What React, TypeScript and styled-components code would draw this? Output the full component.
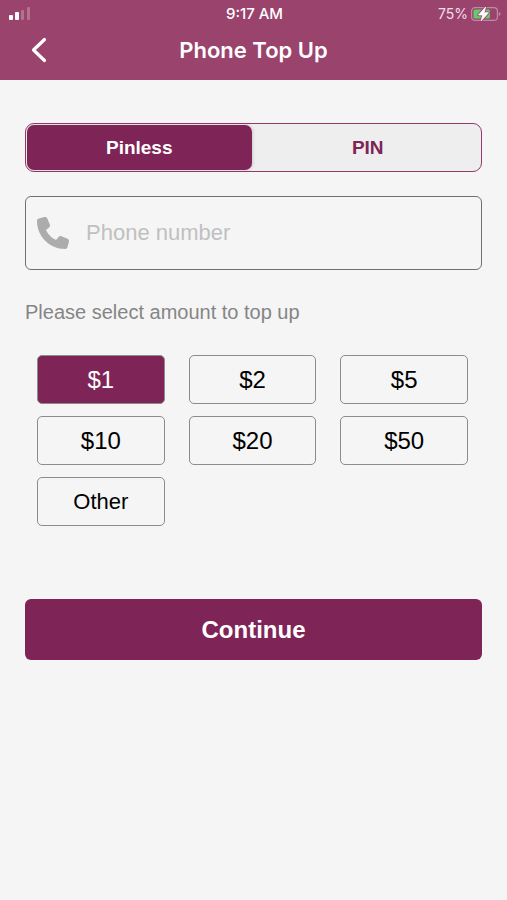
import React, { useState } from "react";
import styled, { createGlobalStyle } from "styled-components";

const plum = "#7f2457";

const GlobalStyle = createGlobalStyle`
  *, *::before, *::after { box-sizing: border-box; }
  body {
    margin: 0;
    background: #f5f5f5;
    color: #000;
    font-family: "Liberation Sans", Arial, Helvetica, sans-serif;
  }
  button, input { font-family: inherit; }
`;

const Screen = styled.div`
  min-height: 100vh;
  background: #f5f5f5;
`;

const Header = styled.header`
  background: #9a436d;
  color: #fff;
  font-family: Inter, "Liberation Sans", sans-serif;
`;

const StatusBar = styled.div`
  display: grid;
  grid-template-columns: 1fr auto 1fr;
  align-items: center;
  height: 28px;
  padding: 0 6px 0 8px;
  font-size: 14px;
  line-height: 16px;
`;

const Clock = styled.time`
  font-size: 15px;
  font-weight: 500;
`;

const BatteryStatus = styled.div`
  display: flex;
  align-items: center;
  justify-content: flex-end;
  gap: 3px;
  color: #f3dfe9;
`;

const TitleBar = styled.div`
  display: grid;
  grid-template-columns: 48px 1fr 48px;
  align-items: center;
  height: 52px;
  padding: 0 15px 8px;
`;

const BackButton = styled.button`
  display: grid;
  place-items: center;
  width: 48px;
  height: 44px;
  padding: 0;
  border: 0;
  background: none;
  color: #fff;
  cursor: pointer;
`;

const Title = styled.h1`
  margin: 0;
  font-size: 22px;
  line-height: 28px;
  font-weight: 600;
  text-align: center;
`;

const Form = styled.form`
  display: flex;
  flex-direction: column;
  padding: 43px 25px 24px;
`;

const Segments = styled.div`
  display: grid;
  grid-template-columns: 1fr 1fr;
  gap: 4px;
  height: 49px;
  padding: 1px;
  border: 1px solid #94396a;
  border-radius: 9px;
  background: #eee;
`;

const Segment = styled.button<{ $active: boolean }>`
  padding: 0;
  border: 0;
  border-radius: 7px;
  background: ${(p) => (p.$active ? plum : "transparent")};
  box-shadow: ${(p) => (p.$active ? "1px 0 3px rgba(0, 0, 0, 0.15)" : "none")};
  color: ${(p) => (p.$active ? "#fff" : plum)};
  font-size: 19px;
  font-weight: 700;
  line-height: 24px;
  cursor: pointer;
`;

const PhoneField = styled.label`
  display: flex;
  align-items: center;
  gap: 17px;
  height: 74px;
  margin-top: 24px;
  padding: 0 12px 0 11px;
  border: 1px solid #707070;
  border-radius: 6px;
`;

const PhoneInput = styled.input`
  flex: 1;
  min-width: 0;
  padding: 0;
  border: 0;
  outline: 0;
  background: transparent;
  color: #000;
  font-size: 22px;
  line-height: 28px;
  &::placeholder { color: #c0c0c0; opacity: 1; }
`;

const AmountGroup = styled.fieldset`
  min-width: 0;
  margin: 30px 0 0;
  padding: 0;
  border: 0;
`;

const Prompt = styled.legend`
  padding: 0;
  color: #858585;
  font-size: 20px;
  line-height: 24px;
`;

const AmountGrid = styled.div`
  display: grid;
  grid-template-columns: repeat(3, 1fr);
  gap: 12px 24px;
  padding: 31px 14px 0 12px;
`;

const AmountButton = styled.button<{ $selected: boolean; $word: boolean }>`
  height: 49px;
  padding: 0;
  border: 1px solid #8c8c8c;
  border-radius: 5px;
  background: ${(p) => (p.$selected ? plum : "transparent")};
  color: ${(p) => (p.$selected ? "#fff" : "#000")};
  font-size: ${(p) => (p.$word ? "22px" : "24px")};
  line-height: 28px;
  cursor: pointer;
`;

const ContinueButton = styled.button`
  height: 61px;
  margin-top: 73px;
  padding: 0;
  border: 0;
  border-radius: 6px;
  background: ${plum};
  color: #fff;
  font-size: 24px;
  font-weight: 700;
  line-height: 28px;
  cursor: pointer;
`;

const SignalIcon = () => (
  <svg width="24" height="16" viewBox="0 0 24 16" fill="#fff" role="img" aria-label="Signal strength">
    <rect x="1" y="9" width="4" height="5" rx="1" />
    <rect x="7" y="6" width="4" height="8" rx="1" />
    <rect x="13" y="4" width="3" height="10" rx="1" opacity="0.25" />
    <rect x="19" y="1" width="3" height="13" rx="1" opacity="0.25" />
  </svg>
);

const BatteryIcon = () => (
  <svg width="30" height="16" viewBox="0 0 30 16" fill="none" aria-hidden="true">
    <rect x="0.6" y="1.6" width="25.8" height="12.8" rx="3.5" stroke="#c08aa7" strokeWidth="1.2" />
    <path d="M27.8 6v4c1.3-.5 1.7-1.2 1.7-2s-.4-1.5-1.7-2Z" fill="#c08aa7" />
    <rect x="2.5" y="3.5" width="16.5" height="9" rx="1.5" fill="#63cc68" />
    <path d="M14.600 1 7.500 9h4.300L10 15l7.500-8.300h-4.400Z" stroke="#9a436d" strokeWidth="2.4" strokeLinejoin="round" />
    <path d="M14.600 1 7.500 9h4.300L10 15l7.500-8.300h-4.400Z" fill="#fff" stroke="#fff" strokeWidth="0.8" strokeLinejoin="round" />
  </svg>
);

const BackIcon = () => (
  <svg width="16" height="26" viewBox="0 0 16 26" fill="none" aria-hidden="true">
    <path d="M13.500 2.500 2.500 13l11 10.500" stroke="currentColor" strokeWidth="3.2" strokeLinecap="round" strokeLinejoin="round" />
  </svg>
);

const PhoneIcon = () => (
  <svg width="32" height="32" viewBox="0 0 512 512" fill="#acacac" aria-hidden="true">
    <path d="M164.9 24.6c-7.700-18.600-28-28.500-47.400-23.200l-88 24C12.100 30.200 0 46 0 64c0 247.400 200.600 448 448 448 18 0 33.800-12.100 38.600-29.500l24-88c5.300-19.400-4.600-39.700-23.200-47.400l-96-40c-16.300-6.800-35.200-2.100-46.300 11.600L304.700 368C234.300 334.700 177.300 277.700 144 207.300l49.300-40.300c13.700-11.200 18.400-30 11.600-46.300l-40-96Z" />
  </svg>
);

const modes = ["Pinless", "PIN"];
const amounts = ["$1", "$2", "$5", "$10", "$20", "$50", "Other"];

export default function App() {
  const [mode, setMode] = useState("Pinless");
  const [amount, setAmount] = useState("$1");

  return (
    <>
      <GlobalStyle />
      <Screen>
        <Header>
          <StatusBar>
            <SignalIcon />
            <Clock>9:17 AM</Clock>
            <BatteryStatus>
              <span>75%</span>
              <BatteryIcon />
            </BatteryStatus>
          </StatusBar>
          <TitleBar>
            <BackButton type="button" aria-label="Back">
              <BackIcon />
            </BackButton>
            <Title>Phone Top Up</Title>
          </TitleBar>
        </Header>
        <Form onSubmit={(e) => e.preventDefault()}>
          <Segments role="group" aria-label="Top up type">
            {modes.map((m) => (
              <Segment key={m} type="button" $active={m === mode} aria-pressed={m === mode} onClick={() => setMode(m)}>
                {m}
              </Segment>
            ))}
          </Segments>
          <PhoneField>
            <PhoneIcon />
            <PhoneInput type="tel" placeholder="Phone number" aria-label="Phone number" />
          </PhoneField>
          <AmountGroup>
            <Prompt>Please select amount to top up</Prompt>
            <AmountGrid>
              {amounts.map((a) => (
                <AmountButton
                  key={a}
                  type="button"
                  $selected={a === amount}
                  $word={!a.startsWith("$")}
                  aria-pressed={a === amount}
                  onClick={() => setAmount(a)}
                >
                  {a}
                </AmountButton>
              ))}
            </AmountGrid>
          </AmountGroup>
          <ContinueButton type="submit">Continue</ContinueButton>
        </Form>
      </Screen>
    </>
  );
}
